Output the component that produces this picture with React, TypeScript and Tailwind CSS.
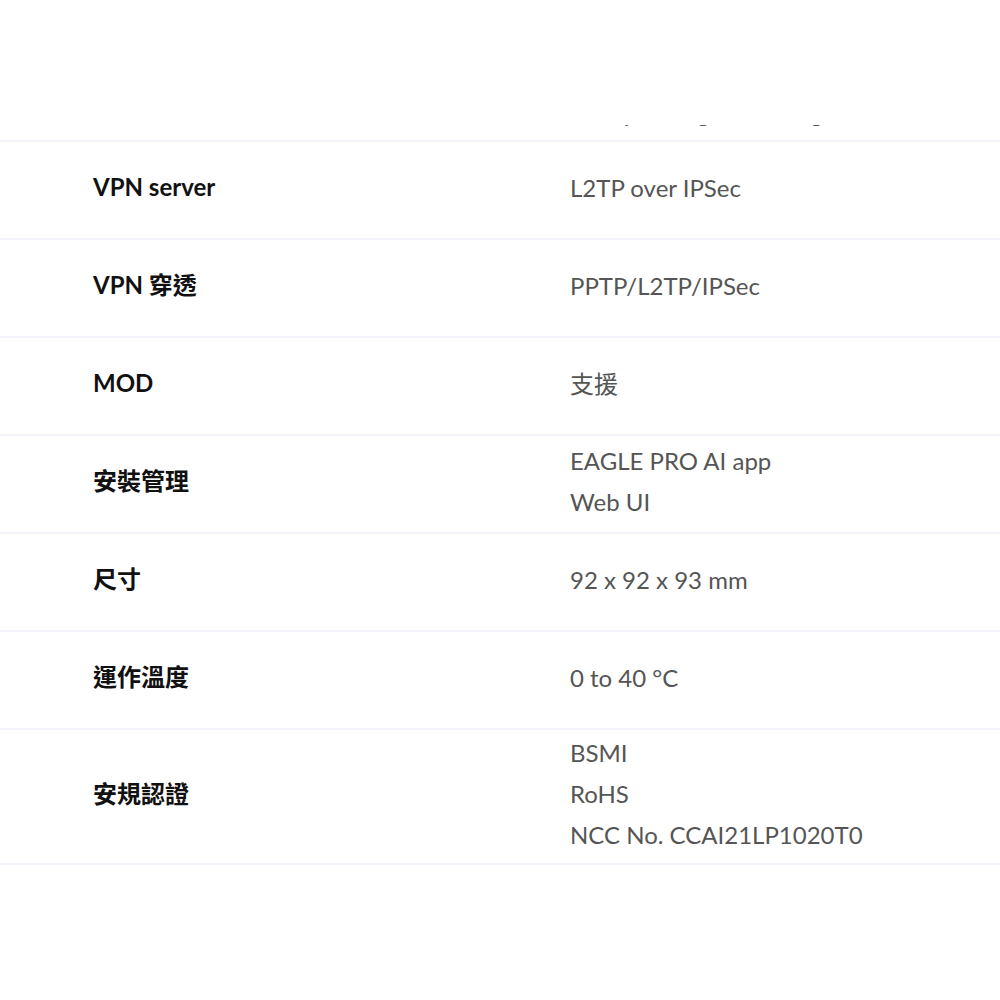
import React from "react";

const rows: { label: string; values: string[] }[] = [
  { label: "VPN server", values: ["L2TP over IPSec"] },
  { label: "VPN 穿透", values: ["PPTP/L2TP/IPSec"] },
  { label: "MOD", values: ["支援"] },
  { label: "安裝管理", values: ["EAGLE PRO AI app", "Web UI"] },
  { label: "尺寸", values: ["92 x 92 x 93 mm"] },
  { label: "運作溫度", values: ["0 to 40 °C"] },
  { label: "安規認證", values: ["BSMI", "RoHS", "NCC No. CCAI21LP1020T0"] },
];

export default function App() {
  return (
    <div
      className="w-[1000px] h-[1000px] bg-white overflow-hidden"
      style={{ fontFamily: "Lato, 'Noto Sans CJK TC', sans-serif" }}
    >
      <div className="h-[142px] border-b-2 border-[#f3f3f9] flex flex-col justify-end">
        <div className="h-[6px] overflow-hidden pl-[570px] mb-[9px]">
          <div className="text-[24px] leading-[24px] text-[#555] whitespace-nowrap -mt-[24px]">
            Set up via a good strong
          </div>
        </div>
      </div>
      {rows.map((r) => (
        <div
          key={r.label}
          className="flex items-center min-h-[98px] pt-[2px] pb-[8px] border-b-2 border-[#f3f3f9]"
        >
          <div className="w-[570px] pl-[93px] text-[24px] font-bold text-[#111]">
            {r.label}
          </div>
          <div className="flex flex-col text-[24px] leading-[41px] text-[#555]">
            {r.values.map((v) => (
              <div key={v}>{v}</div>
            ))}
          </div>
        </div>
      ))}
    </div>
  );
}
